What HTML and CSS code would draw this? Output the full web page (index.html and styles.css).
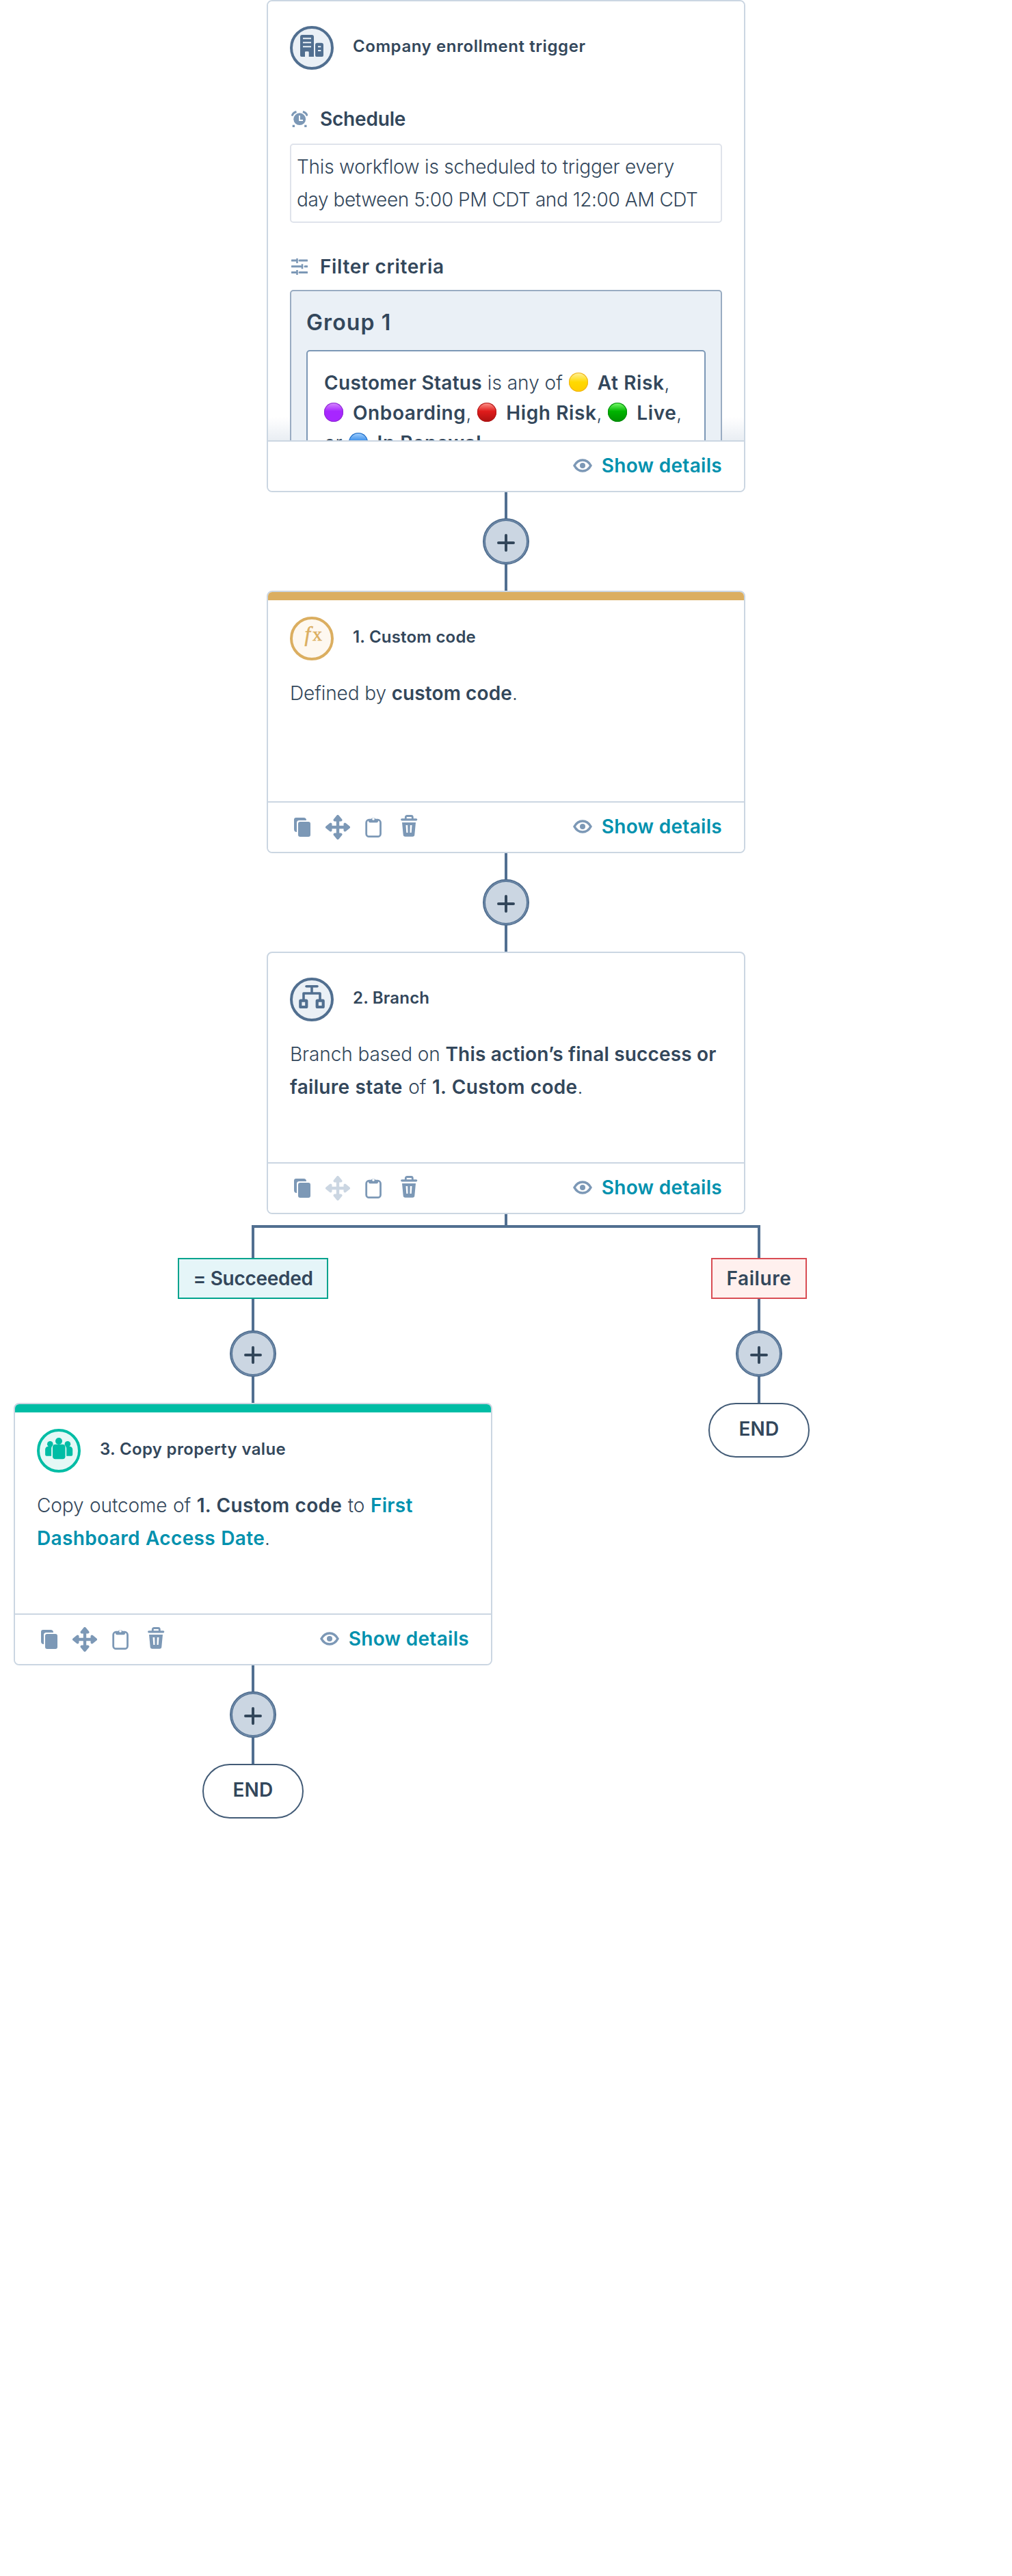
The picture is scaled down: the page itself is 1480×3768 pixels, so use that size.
FILE: index.html
```html
<!DOCTYPE html>
<html lang="en">
<head>
<meta charset="utf-8">
<title>Workflow</title>
<link rel="stylesheet" href="styles.css">
</head>
<body>
<svg class="defs" width="0" height="0" aria-hidden="true">
  <symbol id="i-eye" viewBox="0 0 28 20"><path d="M2 10C5 4.500 9.500 2 14 2s9 2.500 12 8c-3 5.500-7.500 8-12 8S5 15.500 2 10z" fill="none" stroke="currentColor" stroke-width="3.600" stroke-linejoin="round"/><circle cx="14" cy="10" r="4" fill="currentColor"/></symbol>
  <symbol id="i-copy" viewBox="0 0 36 36"><path fill="currentColor" d="M9 4h11a4 4 0 0 1 4 4H13.500A3.500 3.500 0 0 0 10 11.500V25a4 4 0 0 1-4-4V7a3 3 0 0 1 3-3z"/><rect x="12" y="10" width="18" height="22" rx="3" fill="currentColor"/></symbol>
  <symbol id="i-move" viewBox="0 0 36 36"><path d="M18 5v26M5 18h26" stroke="currentColor" stroke-width="4.400"/><path d="M18 2l4.500 5.500h-9zM18 34l4.500-5.500h-9zM2 18l5.500-4.500v9zM34 18l-5.500-4.500v9z" fill="currentColor" stroke="currentColor" stroke-width="4" stroke-linejoin="round"/></symbol>
  <symbol id="i-clip" viewBox="0 0 36 36"><rect x="7.700" y="7.200" width="20.800" height="24.500" rx="4" fill="none" stroke="currentColor" stroke-width="2.800"/><path fill="currentColor" d="M11 7h3.500a3.600 3.600 0 0 1 7 0H25v2.500a2 2 0 0 1-2 1.700H13a2 2 0 0 1-2-1.700z"/><circle cx="18" cy="6" r="1.800" fill="#fff"/></symbol>
  <symbol id="i-trash" viewBox="0 0 36 36"><path d="M13.300 6V3.500a2 2 0 0 1 2-2h6a2 2 0 0 1 2 2V6" fill="none" stroke="currentColor" stroke-width="2.800"/><path d="M7.700 6.800h21" stroke="currentColor" stroke-width="3.200" stroke-linecap="round"/><path fill="currentColor" fill-rule="evenodd" d="M8 11h20l-1.700 18a3 3 0 0 1-3 2.800H12.700a3 3 0 0 1-3-2.800zM13.500 15l.8 11h2.200l-.3-11zM19.800 15l-.3 11h2.200l.8-11z"/></symbol>
  <symbol id="i-plus" viewBox="0 0 26 26"><path d="M13 2v22M2 13h22" stroke="currentColor" stroke-width="4" stroke-linecap="round"/></symbol>
</svg>

<main class="flow">
  <section class="card card-trigger">
    <div class="card-body">
      <header class="card-head">
        <svg class="badge slate" viewBox="0 0 64 64"><circle class="ring" cx="32" cy="32" r="30"/><path fill="currentColor" fill-rule="evenodd" d="M18 13h14a3 3 0 0 1 3 3v29h-7.300v-6.500a1.200 1.200 0 0 0-1.200-1.200h-3.300a1.200 1.200 0 0 0-1.200 1.200V45h-5a2 2 0 0 1-2-2V16a3 3 0 0 1 3-3zM19 17.300v1.900h12v-1.900zM19 23.300v1.900h12v-1.900zM19 29.300v1.900h12v-1.900z"/><path fill="currentColor" fill-rule="evenodd" d="M40 24.700h6a3 3 0 0 1 3 3V43a2 2 0 0 1-2 2h-8a2 2 0 0 1-2-2V27.700a3 3 0 0 1 3-3zM41 29.300v2h4.300v-2zM41 35v2h4.300v-2z"/></svg>
        <h2 class="title title-wide">Company enrollment trigger</h2>
      </header>
      <div class="row row-schedule">
        <svg class="mini" viewBox="0 0 24 24"><circle cx="12.200" cy="12.200" r="8.900" fill="currentColor"/><path d="M12 7v7h5" fill="none" stroke="#fff" stroke-width="1.800"/><path d="M1 7.500A9 9 0 0 1 7.500 1.500M23.400 7.500A9 9 0 0 0 16.900 1.500" fill="none" stroke="currentColor" stroke-width="3"/><path fill="currentColor" d="M1.700 20.700H5V24H1.700zM19.200 20.700h3.300V24h-3.300z"/></svg>
        <h3>Schedule</h3>
      </div>
      <p class="schedule"><span class="ls-a">This workflow is scheduled to trigger every</span><br><span class="ls-b">day between 5:00 PM CDT and 12:00 AM CDT</span></p>
      <div class="row row-filter">
        <svg class="mini" viewBox="0 0 24 24"><path d="M1 3h6M12 3h11M1 11.700h13M20 11.700h3M1 20.500h6M12 20.500h11" stroke="currentColor" stroke-width="3" stroke-linecap="round"/><path d="M8.500 0v7M16 8.200v7M8.500 17v7" stroke="currentColor" stroke-width="2.600"/></svg>
        <h3 class="ls-filter">Filter criteria</h3>
      </div>
      <div class="group">
        <h4>Group 1</h4>
        <p class="criteria"><b class="ls-status">Customer Status</b> <span>is any of</span> <i class="dot yellow"></i><b>At Risk</b>,<br><i class="dot purple"></i><b>Onboarding</b>, <i class="dot red"></i><b>High Risk</b>, <i class="dot green"></i><b>Live</b>,<br>or <i class="dot blue"></i><b>In Renewal</b></p>
      </div>
    </div>
    <footer class="card-foot">
      <div class="tools"></div>
      <a class="details"><svg><use href="#i-eye"/></svg><span>Show details</span></a>
    </footer>
  </section>

  <div class="link"><span class="add"><svg><use href="#i-plus"/></svg></span></div>

  <section class="card">
    <div class="stripe gold-bg"></div>
    <div class="card-body">
      <header class="card-head">
        <svg class="badge gold" viewBox="0 0 64 64"><circle class="ring" cx="32" cy="32" r="30"/><text x="21.500" y="36" class="fx-f">f</text><text x="33" y="35" class="fx-x">x</text></svg>
        <h2 class="title">1. Custom code</h2>
      </header>
      <p class="text">Defined by <b class="ls-0">custom code</b>.</p>
    </div>
    <footer class="card-foot">
      <div class="tools"><svg><use href="#i-copy"/></svg><svg><use href="#i-move"/></svg><svg><use href="#i-clip"/></svg><svg><use href="#i-trash"/></svg></div>
      <a class="details"><svg><use href="#i-eye"/></svg><span>Show details</span></a>
    </footer>
  </section>

  <div class="link"><span class="add"><svg><use href="#i-plus"/></svg></span></div>

  <section class="card">
    <div class="card-body">
      <header class="card-head">
        <svg class="badge slate" viewBox="0 0 64 64"><circle class="ring" cx="32" cy="32" r="30"/><path d="M24 12.700h16" stroke="currentColor" stroke-width="3.600" stroke-linecap="round"/><path d="M32 13v10M20 33V23h24v10" fill="none" stroke="currentColor" stroke-width="3.600" stroke-linejoin="round"/><rect x="15.300" y="33.700" width="9" height="9.300" rx=".6" fill="none" stroke="currentColor" stroke-width="4.200" stroke-linejoin="round"/><rect x="39.700" y="33.700" width="9" height="9.300" rx=".6" fill="none" stroke="currentColor" stroke-width="4.200" stroke-linejoin="round"/></svg>
        <h2 class="title">2. Branch</h2>
      </header>
      <p class="text">Branch based on <b>This action’s final success or</b><br><span class="loose"><b>failure state</b> of <b>1. Custom code</b>.</span></p>
    </div>
    <footer class="card-foot">
      <div class="tools"><svg><use href="#i-copy"/></svg><svg class="off"><use href="#i-move"/></svg><svg><use href="#i-clip"/></svg><svg><use href="#i-trash"/></svg></div>
      <a class="details"><svg><use href="#i-eye"/></svg><span>Show details</span></a>
    </footer>
  </section>

  <div class="stem"></div>
  <div class="fork"></div>

  <div class="branches">
    <div class="branch">
      <div class="line-top"></div>
      <span class="label ok">= Succeeded</span>
      <div class="link link-label"><span class="add"><svg><use href="#i-plus"/></svg></span></div>
      <section class="card">
        <div class="stripe teal-bg"></div>
        <div class="card-body">
          <header class="card-head">
            <svg class="badge teal" viewBox="0 0 64 64"><circle class="ring" cx="32" cy="32" r="30"/><g fill="currentColor"><circle cx="32" cy="18" r="5"/><rect x="23" y="22.700" width="18.500" height="21.600" rx="4"/><circle cx="19.300" cy="22.300" r="4.300"/><circle cx="44.900" cy="22.300" r="4.300"/><path d="M17 25.700h5c-.6 1-.9 2-.9 3.300v10.700h-7a2 2 0 0 1-2-2V30a4.500 4.500 0 0 1 4.900-4.300zM47.200 25.700h-5c.6 1 1 2 1 3.300v10.700h7a2 2 0 0 0 2-2V30a4.500 4.500 0 0 0-5-4.300z"/></g></svg>
            <h2 class="title ls-copy">3. Copy property value</h2>
          </header>
          <p class="text loose">Copy outcome of <b>1. Custom code</b> to <a>First</a><br><a>Dashboard Access Date</a>.</p>
        </div>
        <footer class="card-foot">
          <div class="tools"><svg><use href="#i-copy"/></svg><svg><use href="#i-move"/></svg><svg><use href="#i-clip"/></svg><svg><use href="#i-trash"/></svg></div>
          <a class="details"><svg><use href="#i-eye"/></svg><span>Show details</span></a>
        </footer>
      </section>
      <div class="link"><span class="add"><svg><use href="#i-plus"/></svg></span></div>
      <span class="end">END</span>
    </div>
    <div class="branch">
      <div class="line-top"></div>
      <span class="label fail">Failure</span>
      <div class="link link-label"><span class="add"><svg><use href="#i-plus"/></svg></span></div>
      <span class="end">END</span>
    </div>
  </div>
</main>
</body>
</html>
```
FILE: styles.css
```css
* { box-sizing: border-box; }
body {
  margin: 0;
  min-height: 3768px;
  background: #fff;
  color: #33475b;
  font: 350 28px/48px Inter, "Open Sans", sans-serif;
}
h2, h3, h4, p { margin: 0; font-weight: 600; }
svg { display: block; flex: none; }
.defs { position: absolute; }
b { font-weight: 600; letter-spacing: .18px; }

.flow { width: 1480px; display: flex; flex-direction: column; align-items: center; }

/* Cards */
.card {
  width: 700px;
  height: 384px;
  border: 2px solid #cbd6e2;
  border-radius: 8px;
  background: #fff;
  overflow: hidden;
  display: grid;
  grid-template: minmax(0, 1fr) 74px / 100%;
}
.card-trigger { height: 720px; }
.card-trigger .card-body { background: linear-gradient(to top, #e9eef3, #fff 34px); }
.stripe { height: 12px; grid-area: 1 / 1; }
.gold-bg { background: #dbae60; }
.teal-bg { background: #00bda5; }
.card-body { grid-area: 1 / 1; padding: 36px 32px 0; overflow: hidden; }
.card-head { display: flex; align-items: center; gap: 28px; }
.badge { width: 64px; height: 64px; }
.ring { stroke: currentColor; stroke-width: 4; }
.slate { color: #516f90; }
.slate .ring { fill: #eaf0f6; }
.gold { color: #dbae60; }
.gold .ring { fill: #fef8f0; }
.teal { color: #00bda5; }
.teal .ring { fill: #e5f8f6; }
.fx-f, .fx-x { fill: currentColor; stroke: currentColor; stroke-width: .5; font: italic 31px "Liberation Serif", serif; }
.fx-x { font-style: normal; font-size: 28px; }
.title { font-size: 24px; line-height: 36px; padding-bottom: 5px; letter-spacing: .2px; }
.title-wide { letter-spacing: .57px; }
.ls-copy { letter-spacing: .33px; }
.text { margin-top: 24px; font-weight: 350; letter-spacing: -.1px; white-space: nowrap; }
.text a { color: #0091ae; font-weight: 600; letter-spacing: .35px; }
.loose { word-spacing: .8px; }
.loose b { letter-spacing: .3px; }
.text .ls-0 { letter-spacing: .1px; }

.card-foot {
  grid-area: 2 / 1;
  border-top: 2px solid #cbd6e2;
  padding: 0 32px;
  display: flex;
  align-items: center;
  justify-content: space-between;
  background: #fff;
}
.tools { display: flex; gap: 16px; color: #7c98b6; }
.tools svg { width: 36px; height: 36px; }
.tools .off { color: #cbd6e2; }
.details { display: flex; align-items: center; gap: 14px; padding-bottom: 3px; color: #0091ae; font-weight: 600; letter-spacing: .3px; }
.details svg { width: 28px; height: 20px; color: #7c98b6; }

/* Enrollment trigger */
.row { display: flex; align-items: center; gap: 18px; padding-left: 2px; }
.row-schedule { margin-top: 48px; }
.row-filter { margin-top: 40px; }
.row h3 { font-size: 28px; line-height: 48px; letter-spacing: -.2px; }
.row .ls-filter { letter-spacing: .65px; }
.mini { width: 24px; height: 24px; color: #7c98b6; }
.schedule {
  height: 116px;
  margin-top: 12px;
  padding: 8px;
  border: 2px solid #dfe3eb;
  border-radius: 5px;
  background: #fff;
  font-weight: 350;
  white-space: nowrap;
}
.ls-a { letter-spacing: -.22px; }
.ls-b { letter-spacing: -.43px; }
.group {
  height: 320px;
  margin-top: 10px;
  padding: 22px;
  border: 2px solid #99acc2;
  border-radius: 5px;
  background: #eaf0f6;
}
.group h4 { font-size: 32px; line-height: 48px; letter-spacing: 1.1px; }
.criteria {
  height: 240px;
  margin-top: 16px;
  padding: 24px;
  border: 2px solid #7c98b6;
  border-radius: 5px;
  background: #fff;
  font-weight: 350;
  line-height: 44px;
  white-space: nowrap;
}
.criteria b { letter-spacing: .6px; }
.criteria .ls-status { letter-spacing: .3px; }
.dot {
  display: inline-block;
  width: 28px;
  height: 28px;
  margin: 0 14px 0 1px;
  border-radius: 50%;
  vertical-align: -3px;
}
.yellow { background: linear-gradient(#fff2a0, #ffd900 50%, #ffcc00); box-shadow: inset 0 0 0 1px #efb21a; }
.purple { margin-left: 0; background: linear-gradient(#d78bff, #a726ff 45%, #a726ff); box-shadow: inset 0 0 0 1px #8d2bd0; }
.red { background: linear-gradient(#ff9a90, #e01b1b 45%, #ad1111); box-shadow: inset 0 0 0 1px #b01818; }
.green { background: linear-gradient(#7dff70, #00b400 45%, #009000); box-shadow: inset 0 0 0 1px #008a0a; }
.blue { background: linear-gradient(#a5d2ff, #2b85e6 50%, #0d62c4); box-shadow: inset 0 0 0 1px #1565c0; }

/* Connectors */
.link {
  width: 68px;
  height: 144px;
  display: flex;
  align-items: center;
  background: linear-gradient(#516f90, #516f90) center / 4px 100% no-repeat;
}
.link-label { height: 152px; padding-top: 8px; }
.add {
  width: 68px;
  height: 68px;
  padding-top: 4px;
  border: 2px solid #516f90;
  border-radius: 50%;
  box-shadow: inset 0 0 0 1px #7590b0, inset 0 0 0 2px #516f90;
  background: #cbd6e2;
  color: #33475b;
  display: flex;
  align-items: center;
  justify-content: center;
}
.add svg { width: 26px; height: 26px; }
.stem { width: 4px; height: 16px; background: #516f90; }
.fork { width: 744px; height: 4px; background: #516f90; }
.branches { display: grid; grid-template-columns: 740px 740px; }
.branch { display: flex; flex-direction: column; align-items: center; }
.line-top { width: 4px; height: 44px; background: #516f90; }
.label {
  height: 60px;
  border: 2px solid;
  display: flex;
  align-items: center;
  justify-content: center;
  font-weight: 600;
}
.ok { width: 220px; border-color: #00a38d; background: linear-gradient(#e5f5f8, #e5f5f8); letter-spacing: -.3px; }
.fail { width: 140px; border-color: #d94c53; background: #fff0ee; letter-spacing: .6px; }
.end {
  width: 148px;
  height: 80px;
  padding-bottom: 4px;
  border: 2px solid #425b76;
  border-radius: 40px;
  background: #fff;
  display: flex;
  align-items: center;
  justify-content: center;
  font-weight: 600;
  letter-spacing: .2px;
}
```
